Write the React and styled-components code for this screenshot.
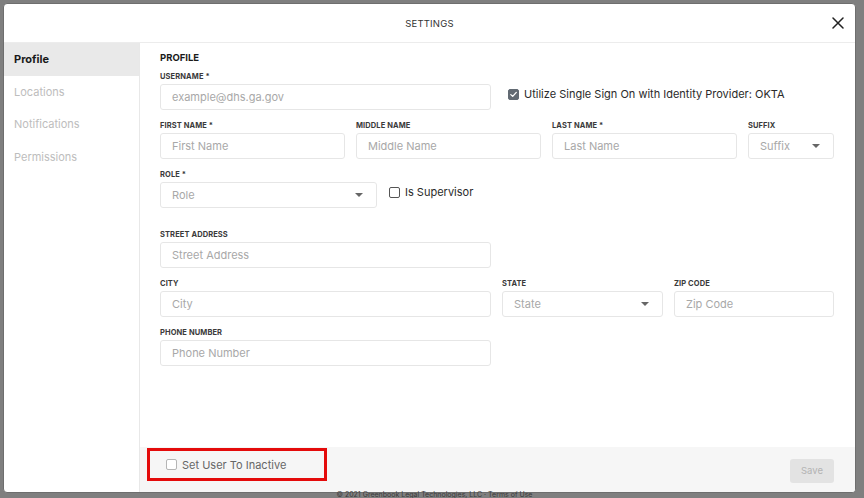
import styled, { createGlobalStyle } from 'styled-components';

const GlobalStyle = createGlobalStyle`
    html, body {
        margin: 0;
        padding: 0;
        height: 100%;
        overflow: hidden;
    }
    body {
        background: #7f7f7f;
        font-family: Inter, "Noto Sans", "Liberation Sans", sans-serif;
    }
    * { box-sizing: border-box; }
`

function CloseIcon() {
    return (
        <svg width="12" height="12" viewBox="0 0 12 12">
            <path d="M1 1 L11 11 M11 1 L1 11" stroke="#222" strokeWidth="1.5" strokeLinecap="round" />
        </svg>
    )
}

function Caret() {
    return (
        <svg width="8" height="4" viewBox="0 0 8 4">
            <path d="M0 0 L8 0 L4 4 Z" fill="#666" />
        </svg>
    )
}

function Check({ checked }) {
    return (
        <Box checked={checked}>
            {checked && (
                <svg width="9" height="9" viewBox="0 0 9 9">
                    <path d="M1.8 4.6 L3.7 6.4 L7.3 2.4" stroke="#fff" strokeWidth="1.3" fill="none" strokeLinecap="round" strokeLinejoin="round" />
                </svg>
            )}
        </Box>
    )
}

function Field({ label, placeholder, select }) {
    return (
        <FieldWrap>
            <Label>{label}</Label>
            <InputBox>
                <Placeholder>{placeholder}</Placeholder>
                {select && <Caret />}
            </InputBox>
        </FieldWrap>
    )
}

export default function App() {
    return (
        <Page>
            <GlobalStyle />
            <Modal>
                <Header>
                    <HeaderTitle>SETTINGS</HeaderTitle>
                    <CloseButton><CloseIcon /></CloseButton>
                </Header>
                <Body>
                    <Sidebar>
                        <NavItem active>Profile</NavItem>
                        <NavItem>Locations</NavItem>
                        <NavItem>Notifications</NavItem>
                        <NavItem>Permissions</NavItem>
                    </Sidebar>
                    <Main>
                        <Content>
                            <SectionTitle>PROFILE</SectionTitle>
                            <Row cols="331px 1fr">
                                <Field label="USERNAME *" placeholder="example@dhs.ga.gov" />
                                <CheckRow>
                                    <Check checked />
                                    <CheckText>Utilize Single Sign On with Identity Provider: OKTA</CheckText>
                                </CheckRow>
                            </Row>
                            <Row cols="185px 185px 185px 86px">
                                <Field label="FIRST NAME *" placeholder="First Name" />
                                <Field label="MIDDLE NAME" placeholder="Middle Name" />
                                <Field label="LAST NAME *" placeholder="Last Name" />
                                <Field label="SUFFIX" placeholder="Suffix" select />
                            </Row>
                            <Row cols="217px 1fr">
                                <Field label="ROLE *" placeholder="Role" select />
                                <CheckRow top="12px" left="1px">
                                    <Check />
                                    <CheckText>Is Supervisor</CheckText>
                                </CheckRow>
                            </Row>
                            <Row cols="331px" gapTop="22px">
                                <Field label="STREET ADDRESS" placeholder="Street Address" />
                            </Row>
                            <Row cols="331px 161px 160px">
                                <Field label="CITY" placeholder="City" />
                                <Field label="STATE" placeholder="State" select />
                                <Field label="ZIP CODE" placeholder="Zip Code" />
                            </Row>
                            <Row cols="331px">
                                <Field label="PHONE NUMBER" placeholder="Phone Number" />
                            </Row>
                        </Content>
                        <Footer>
                            <Highlight>
                                <Check />
                                <InactiveText>Set User To Inactive</InactiveText>
                            </Highlight>
                            <SaveButton>Save</SaveButton>
                        </Footer>
                    </Main>
                </Body>
            </Modal>
            <Copyright>© 2021 Greenbook Legal Technologies, LLC · Terms of Use</Copyright>
        </Page>
    )
}

const Page = styled.div`
    height: 498px;
    padding: 3px 8px 0 3px;
    display: flex;
    flex-direction: column;
    align-items: stretch;
`

const Modal = styled.div`
    height: 490px;
    flex-shrink: 0;
    background: #fff;
    border-radius: 4px;
    border: 1px solid #6e6e6e;
    display: flex;
    flex-direction: column;
    overflow: hidden;
`

const Header = styled.div`
    height: 39px;
    flex-shrink: 0;
    display: flex;
    align-items: center;
    justify-content: center;
    position: relative;
    border-bottom: 1px solid #ececec;
`

const HeaderTitle = styled.div`
    font-size: 9.5px;
    color: #333;
    letter-spacing: 0.2px;
`

const CloseButton = styled.div`
    position: absolute;
    right: 11px;
    top: 13px;
    display: flex;
`

const Body = styled.div`
    flex: 1;
    display: flex;
    min-height: 0;
`

const Sidebar = styled.div`
    width: 136px;
    flex-shrink: 0;
    border-right: 1px solid #e8e8e8;
    display: flex;
    flex-direction: column;
`

const NavItem = styled.div`
    height: 32.5px;
    display: flex;
    align-items: center;
    padding-left: 10px;
    font-size: 11px;
    font-weight: ${p => (p.active ? 700 : 400)};
    color: ${p => (p.active ? '#1a1a1a' : '#bdbdbd')};
    background: ${p => (p.active ? '#e9e9e9' : 'transparent')};
`

const Main = styled.div`
    flex: 1;
    display: flex;
    flex-direction: column;
`

const Content = styled.div`
    flex: 1;
    padding: 9px 20px 0 20px;
`

const SectionTitle = styled.div`
    font-size: 9.5px;
    font-weight: 700;
    color: #1a1a1a;
    line-height: 12px;
    margin-bottom: 8px;
`

const Row = styled.div`
    display: grid;
    grid-template-columns: ${p => p.cols};
    column-gap: 11px;
    margin-top: ${p => p.gapTop || '0'};
    margin-bottom: 11px;
`

const FieldWrap = styled.div`
    display: flex;
    flex-direction: column;
`

const Label = styled.div`
    font-size: 7.5px;
    font-weight: 700;
    color: #3a3a3a;
    line-height: 10px;
    letter-spacing: 0.1px;
    margin-bottom: 2px;
`

const InputBox = styled.div`
    height: 26px;
    border: 1px solid #e6e6e6;
    border-radius: 3px;
    display: flex;
    align-items: center;
    justify-content: space-between;
    padding: 0 13px 0 11px;
    background: #fff;
`

const Placeholder = styled.span`
    font-size: 11px;
    color: #a8a8a8;
`

const CheckRow = styled.div`
    display: flex;
    align-items: center;
    gap: 5px;
    padding-left: ${p => p.left || '6px'};
    margin-top: ${p => p.top || '12px'};
    height: 20px;
`

const Box = styled.span`
    width: 11px;
    height: 11px;
    border-radius: 2px;
    flex-shrink: 0;
    display: inline-flex;
    align-items: center;
    justify-content: center;
    background: ${p => (p.checked ? '#626a73' : '#fff')};
    border: 1px solid ${p => (p.checked ? '#626a73' : '#555')};
`

const CheckText = styled.span`
    font-size: 11px;
    color: #2a2a2a;
`

const Footer = styled.div`
    height: 45px;
    flex-shrink: 0;
    background: #f6f6f6;
    display: flex;
    align-items: center;
    justify-content: space-between;
    padding: 0 21px 0 7px;
`

const Highlight = styled.div`
    width: 180px;
    height: 33px;
    margin-top: -10px;
    border: 3px solid #e40b0b;
    display: flex;
    align-items: center;
    gap: 5px;
    padding-left: 16px;

    ${Box} {
        border-color: #b5b5b5;
    }
`

const InactiveText = styled.span`
    font-size: 11px;
    color: #666;
`

const SaveButton = styled.div`
    width: 44px;
    height: 24px;
    border-radius: 3px;
    background: #e3e3e3;
    color: #b3b3b3;
    font-size: 9.5px;
    display: flex;
    align-items: center;
    justify-content: center;
    margin-top: 2px;
`

const Copyright = styled.div`
    font-size: 7px;
    color: #3a3a3a;
    text-align: center;
    margin-top: -2px;
    padding-left: 10px;
    line-height: 7px;
`
